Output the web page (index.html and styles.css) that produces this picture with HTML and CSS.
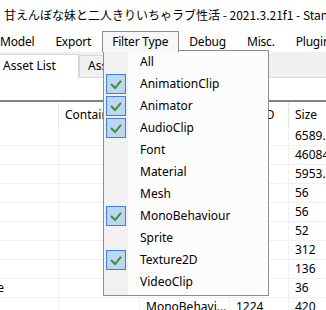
FILE: index.html
```html
<!DOCTYPE html>
<html>

<head>
    <meta charset="utf-8" />
    <title>AssetStudio</title>
    <link rel="stylesheet" href="styles.css">
</head>

<body>
    <div class="window">
        <div class="titlebar">甘えんぼな妹と二人きりいちゃラブ性活 - 2021.3.21f1 - StandaloneWindows64</div>

        <ul class="menubar">
            <li>Model</li>
            <li>Export</li>
            <li class="open">Filter Type</li>
            <li>Debug</li>
            <li>Misc.</li>
            <li>Plugins</li>
        </ul>

        <div class="tabs">
            <div class="tab active">Asset List</div>
            <div class="tab">Asset Classes</div>
        </div>
        <div class="filterbar"></div>

        <div class="listview">
            <div class="row head">
                <span>Name</span><span>Container</span><span>Type</span><span>PathID</span><span>Size</span>
            </div>
            <div class="row"><span>bgm_title</span><span></span><span>AudioClip</span><span>12</span><span>6589.36</span></div>
            <div class="row"><span>font_main</span><span></span><span>Font</span><span>15</span><span>460844</span></div>
            <div class="row"><span>se_click</span><span></span><span>AudioClip</span><span>21</span><span>5953.12</span></div>
            <div class="row"><span>mat_ui</span><span></span><span>Material</span><span>34</span><span>56</span></div>
            <div class="row"><span>mat_bg</span><span></span><span>Material</span><span>35</span><span>56</span></div>
            <div class="row"><span>quad</span><span></span><span>Mesh</span><span>41</span><span>52</span></div>
            <div class="row"><span>Main</span><span></span><span>MonoBehaviour</span><span>57</span><span>312</span></div>
            <div class="row"><span>icon_01</span><span></span><span>Sprite</span><span>63</span><span>136</span></div>
            <div class="row"><span>ui_titlebg_texture</span><span></span><span>Texture2D</span><span>88</span><span>36</span></div>
            <div class="row"><span>Loader</span><span></span><span>MonoBehaviour</span><span>1224</span><span>420</span></div>
        </div>

        <!-- open Filter Type menu -->
        <div class="dropdown">
            <div class="item"><span class="check"></span>All</div>
            <div class="item"><span class="check on"><svg viewBox="0 0 20 20"><path d="M4.5 10 L9 14.5 L15.5 6.5" /></svg></span>AnimationClip</div>
            <div class="item"><span class="check on"><svg viewBox="0 0 20 20"><path d="M4.5 10 L9 14.5 L15.5 6.5" /></svg></span>Animator</div>
            <div class="item"><span class="check on"><svg viewBox="0 0 20 20"><path d="M4.5 10 L9 14.5 L15.5 6.5" /></svg></span>AudioClip</div>
            <div class="item"><span class="check"></span>Font</div>
            <div class="item"><span class="check"></span>Material</div>
            <div class="item"><span class="check"></span>Mesh</div>
            <div class="item"><span class="check on"><svg viewBox="0 0 20 20"><path d="M4.5 10 L9 14.5 L15.5 6.5" /></svg></span>MonoBehaviour</div>
            <div class="item"><span class="check"></span>Sprite</div>
            <div class="item"><span class="check on"><svg viewBox="0 0 20 20"><path d="M4.5 10 L9 14.5 L15.5 6.5" /></svg></span>Texture2D</div>
            <div class="item"><span class="check"></span>VideoClip</div>
        </div>
    </div>
</body>

</html>
```

FILE: styles.css
```css
body {
    margin: 0;
    padding: 0;
    background-color: #fff;
    font-family: "Noto Sans", sans-serif;
    font-size: 12px;
    color: #000;
    overflow: hidden;
}

.window {
    position: relative;
    width: 326px;
    height: 310px;
    overflow: hidden;
}

.titlebar {
    height: 29px;
    line-height: 29px;
    padding-left: 4px;
    font-family: "Noto Sans CJK JP", "Noto Sans", sans-serif;
    white-space: nowrap;
}

.menubar {
    display: flex;
    height: 23px;
    margin: 0 0 0 -10px;
    padding: 0;
    list-style: none;
    letter-spacing: -0.2px;
    white-space: nowrap;
}

.menubar li {
    margin-top: 2px;
    height: 19px;
    line-height: 19px;
    padding: 0 10px 0 9px;
    border: 1px solid transparent;
    border-bottom: 0;
}

.menubar li.open {
    position: relative;
    z-index: 2;
    height: 20px;
    background: #f7f7f7;
    border-color: #8e8e8e;
}

.tabs {
    display: flex;
    align-items: flex-end;
    height: 25px;
    margin-left: -23px;
    background: #f0f0f0;
    white-space: nowrap;
}

.tab {
    box-sizing: border-box;
    height: 22px;
    line-height: 20px;
    padding: 0 8px;
    border: 1px solid #d9d9d9;
    border-bottom: 0;
}

.tab.active {
    position: relative;
    z-index: 1;
    width: 102px;
    height: 24px;
    margin-bottom: -1px;
    padding-left: 25px;
    background: #fff;
    line-height: 22px;
}

.filterbar {
    height: 22px;
    border-top: 1px solid #d9d9d9;
    background: #fff;
}

.listview {
    margin-left: -100px;
    border-top: 2px solid #828282;
}

.row {
    display: grid;
    grid-template-columns: 159px 81px 90px 59px 90px;
    height: 18px;
    line-height: 18px;
    border-bottom: 1px solid #f0f0f0;
    white-space: nowrap;
}

.row span {
    padding-left: 6px;
    overflow: hidden;
    text-overflow: ellipsis;
    border-right: 1px solid #f0f0f0;
}

.row span:last-child {
    text-overflow: clip;
    border-right: 0;
}

.row.head {
    height: 25px;
    line-height: 25px;
    border-bottom: 0;
}

.row.head span {
    border-right-color: #e5e5e5;
}

.dropdown {
    position: absolute;
    left: 103px;
    top: 50px;
    z-index: 1;
    box-sizing: border-box;
    width: 166px;
    height: 246px;
    padding-bottom: 2px;
    border: 1px solid #8e8e8e;
    background: linear-gradient(to right, #f1f1f1 0, #f1f1f1 24px, #fcfcfc 24px);
}

.item {
    display: flex;
    align-items: center;
    height: 22px;
    line-height: 22px;
}

.check {
    box-sizing: border-box;
    width: 20px;
    height: 20px;
    margin: 0 14px 0 2px;
}

.check.on {
    border: 1px solid #3f7fd6;
    background: #bcd6f3;
}

.check svg {
    display: block;
    width: 18px;
    height: 18px;
}

.check path {
    fill: none;
    stroke: #3f8e34;
    stroke-width: 2.2;
}
```
